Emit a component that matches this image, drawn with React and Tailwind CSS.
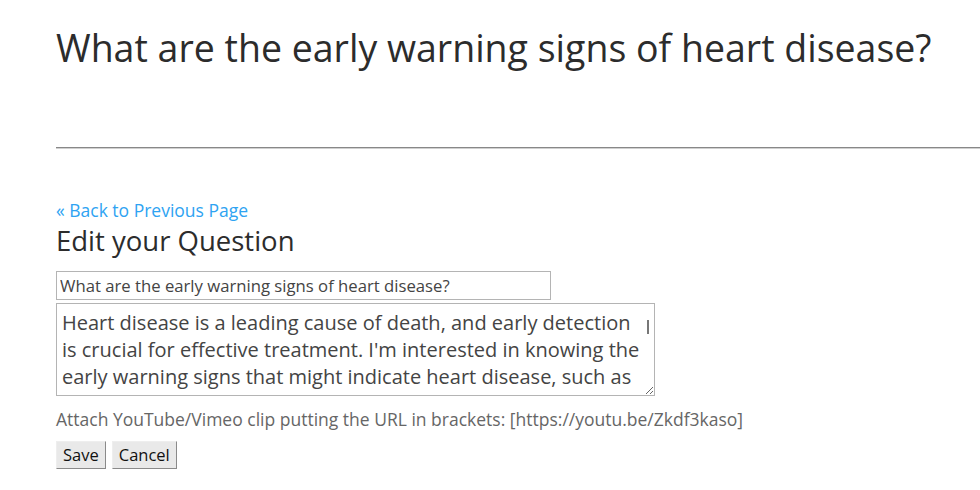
import { useState } from 'react';

const App = () => {
    const [title, setTitle] = useState('What are the early warning signs of heart disease?');
    const [body, setBody] = useState(
        "Heart disease is a leading cause of death, and early detection is crucial for effective treatment. I'm interested in knowing the early warning signs that might indicate heart disease, such as chest pain, shortness of breath, or fatigue."
    );

    return (
        <div className="min-h-[490px] bg-white font-['Open_Sans',sans-serif] text-[#333]">
            <div className="pl-[56px]">
                <h1 className="pt-[22px] text-[37.5px] leading-[52px] text-[#2c2c2c] whitespace-nowrap">
                    What are the early warning signs of heart disease?
                </h1>

                <hr className="mt-[73px] border-t border-b border-t-[#888] border-b-[#d0d0d0] border-x-0" />

                {/* Edit form */}
                <div className="mt-[49px]">
                    <a href="#" className="block text-[17.5px] leading-[24px] text-[#2ea3f2]">
                        « Back to Previous Page
                    </a>
                    <h2 className="text-[27.5px] leading-[38px] text-[#2c2c2c]">Edit your Question</h2>

                    <input
                        type="text"
                        value={title}
                        onChange={(e) => setTitle(e.target.value)}
                        className="mt-[11px] block w-[495px] h-[29px] px-[3px] border border-[#b4b4b4] text-[16.7px] text-[#444] outline-none"
                    />

                    <div className="relative mt-[3px] w-[599px]">
                        <textarea
                            value={body}
                            onChange={(e) => setBody(e.target.value)}
                            rows={3}
                            className="block w-[599px] h-[93px] pl-[5px] pr-[14px] pt-[5px] border border-[#b4b4b4] text-[20px] leading-[27px] text-[#444] overflow-hidden outline-none"
                        />
                        {/* overlay scroll thumb */}
                        <div className="absolute right-[6px] top-[17px] w-[2px] h-[14px] bg-[#777]" />
                    </div>

                    <p className="mt-[11px] text-[17.5px] leading-[24px] text-[#666]">
                        Attach YouTube/Vimeo clip putting the URL in brackets: [https://youtu.be/Zkdf3kaso]
                    </p>

                    <div className="mt-[10px] flex gap-[6px]">
                        <button className="h-[28px] px-[6px] bg-[#e9e9e9] border border-[#eee] border-r-[#8a8a8a] border-b-[#8a8a8a] text-[16.5px] text-[#111]">
                            Save
                        </button>
                        <button className="h-[28px] px-[6px] bg-[#e9e9e9] border border-[#eee] border-r-[#8a8a8a] border-b-[#8a8a8a] text-[16.5px] text-[#111]">
                            Cancel
                        </button>
                    </div>
                </div>
            </div>
        </div>
    );
};

export default App;
